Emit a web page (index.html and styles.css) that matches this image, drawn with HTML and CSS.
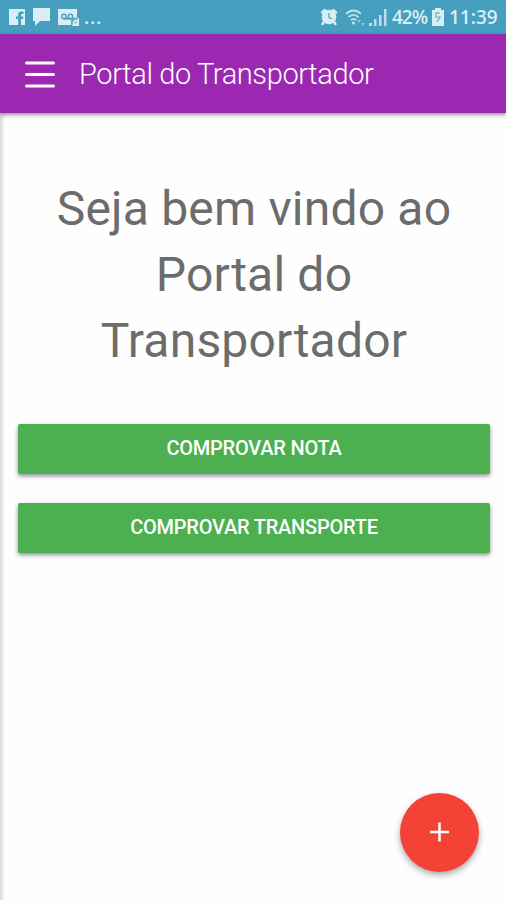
FILE: index.html
```html
<!DOCTYPE html>
<html lang="pt-BR">
<head>
    <meta charset="UTF-8">
    <meta name="viewport" content="width=device-width, initial-scale=1.0">
    <title>Portal do Transportador</title>
    <link rel="stylesheet" href="styles.css">
</head>
<body>

<div class="status-bar">
    <div class="status-left">
        <svg width="16" height="16" viewBox="0 0 16 16">
            <path fill="#d8edf4" d="M0 0h16v16h-4V10h2.200V7.500H12V6q0-1 1-1h1.500V2.500H12Q9.200 2.500 9.200 5.500v2H7V10h2.200v6H0z"/>
        </svg>
        <svg width="17" height="18" viewBox="0 0 17 18">
            <path fill="#d8edf4" d="M0 0h17v13H7l-5 5v-5H0z"/>
        </svg>
        <svg width="21" height="17" viewBox="0 0 21 17">
            <path fill="#d8edf4" d="M0 0h19v9h2v8h-7v-1H0z"/>
            <g fill="none" stroke="#469fbf" stroke-width="1.500">
                <circle cx="6" cy="7.500" r="2.200"/>
                <circle cx="12.500" cy="7.500" r="2.200"/>
                <path d="M6 9.700h6.500M14 16V11h1.500V9.500h3V11"/>
            </g>
            <circle cx="17.500" cy="13.500" r="1.200" fill="#8fc5d8"/>
        </svg>
        <span class="dots">...</span>
    </div>
    <div class="status-right">
        <svg width="18" height="18" viewBox="0 0 18 18">
            <circle cx="9" cy="9" r="7.300" fill="#d8edf4"/>
            <path fill="none" stroke="#d8edf4" stroke-width="2.500" stroke-linecap="round" d="M2 4.500L5 2M16 4.500L13 2M3.500 14.500L2.500 16M14.500 14.500l1 1.500"/>
            <path fill="none" stroke="#58a8c5" stroke-width="1.300" d="M9 5v4.500l3 1.500"/>
        </svg>
        <svg class="wifi" width="21" height="17" viewBox="0 0 21 17">
            <g fill="none" stroke="#c5e2ec" stroke-width="1.700">
                <path d="M1 5Q8.500-2 16 5"/>
                <path d="M3.500 8.200q5-4.500 10 0"/>
                <path d="M5.800 11.200q2.700-2.200 5.400 0"/>
            </g>
            <circle cx="8.500" cy="14" r="1.500" fill="#c5e2ec"/>
            <path fill="#8fc5d8" d="M12 11h4l-2 3zM16 14h4l-2 3z"/>
        </svg>
        <svg class="signal" width="18" height="17" viewBox="0 0 18 17">
            <path fill="#bddee9" d="M0 14h3v3H0zM5 10h2.500v7H5zM10 6h2.500v11H10zM15 0h2.500v17H15z"/>
        </svg>
        <span class="battery-level">42%</span>
        <svg class="battery" width="12" height="18" viewBox="0 0 12 18">
            <path fill="#d8edf4" d="M3 0h6v2h3v16H0V2h3z"/>
            <path fill="none" stroke="#58a8c5" stroke-width="1.100" d="M8 5H4v4h4l-3 5"/>
        </svg>
        <span class="clock">11:39</span>
    </div>
</div>

<header class="navbar">
    <svg class="menu-icon" width="30" height="28" viewBox="0 0 30 28">
        <path fill="none" stroke="#fff" stroke-width="3" stroke-linecap="round" d="M1.500 2h27M1.500 13.500h27M1.500 25h27"/>
    </svg>
    <span class="navbar-title">Portal do Transportador</span>
</header>

<main class="content">
    <h1>Seja bem vindo ao<br>Portal do<br>Transportador</h1>
    <button class="btn">Comprovar Nota</button>
    <button class="btn">Comprovar Transporte</button>
</main>

<button class="fab" aria-label="Adicionar">
    <svg width="20" height="20" viewBox="0 0 20 20">
        <path fill="none" stroke="#fff" stroke-width="2.500" d="M9.500 .5v19M0 10h19"/>
    </svg>
</button>

</body>
</html>
```
FILE: styles.css
```css
body {
    margin: 0;
    height: 900px;
    overflow: hidden;
    display: flex;
    flex-direction: column;
    font-family: Roboto, sans-serif;
    background: #fefefe;
}

.status-bar {
    height: 34px;
    display: flex;
    justify-content: space-between;
    box-sizing: border-box;
    padding: 0 7px 0 9px;
    background: #469fbf;
    color: #d8edf4;
}

.status-left,
.status-right {
    display: flex;
    align-items: center;
}

.status-left {
    gap: 8px;
}

.dots {
    font-size: 20px;
    font-weight: 500;
    letter-spacing: 0.5px;
    margin-left: -3px;
}

.status-right {
    font-family: "Open Sans", sans-serif;
    font-size: 19px;
    font-weight: 600;
}

.wifi {
    margin-left: 7px;
}

.signal {
    margin-left: 3px;
}

.battery-level {
    width: 36px;
    margin-left: 5px;
    letter-spacing: -1px;
}

.battery {
    margin-left: 4px;
}

.clock {
    width: 50px;
    margin-left: 5px;
    letter-spacing: 0;
}

.navbar {
    height: 79px;
    display: flex;
    align-items: center;
    box-sizing: border-box;
    padding-left: 25px;
    background: #9c27b0;
    box-shadow: 0 2px 4px rgba(0, 0, 0, 0.4);
    z-index: 1;
}

.menu-icon {
    margin-top: 3px;
}

.navbar-title {
    margin: 1px 0 0 24px;
    font-size: 29px;
    font-weight: 300;
    letter-spacing: -0.38px;
    color: #fff;
}

.content {
    flex: 1;
    padding: 63px 16px 0 18px;
    box-shadow: inset 4px 0 3px -1px rgba(0, 0, 0, 0.13);
}

h1 {
    margin: 0 0 50px;
    font-size: 48px;
    font-weight: 400;
    line-height: 66px;
    letter-spacing: 0.2px;
    text-align: center;
    color: #6c6c6c;
}

.btn {
    display: block;
    width: 100%;
    height: 50px;
    margin-bottom: 29px;
    padding: 0 0 2px;
    border: none;
    border-radius: 2px;
    background: #4caf50;
    color: #fff;
    font-family: inherit;
    font-size: 20px;
    font-weight: 500;
    letter-spacing: -0.22px;
    text-transform: uppercase;
    box-shadow: 0 2px 4px rgba(0, 0, 0, 0.45);
}

.fab {
    position: absolute;
    right: 27px;
    bottom: 28px;
    width: 79px;
    height: 79px;
    display: flex;
    align-items: center;
    justify-content: center;
    padding: 0 0 2px;
    border: none;
    border-radius: 50%;
    background: #f44336;
    box-shadow: 0 3px 6px rgba(0, 0, 0, 0.35);
}
```
